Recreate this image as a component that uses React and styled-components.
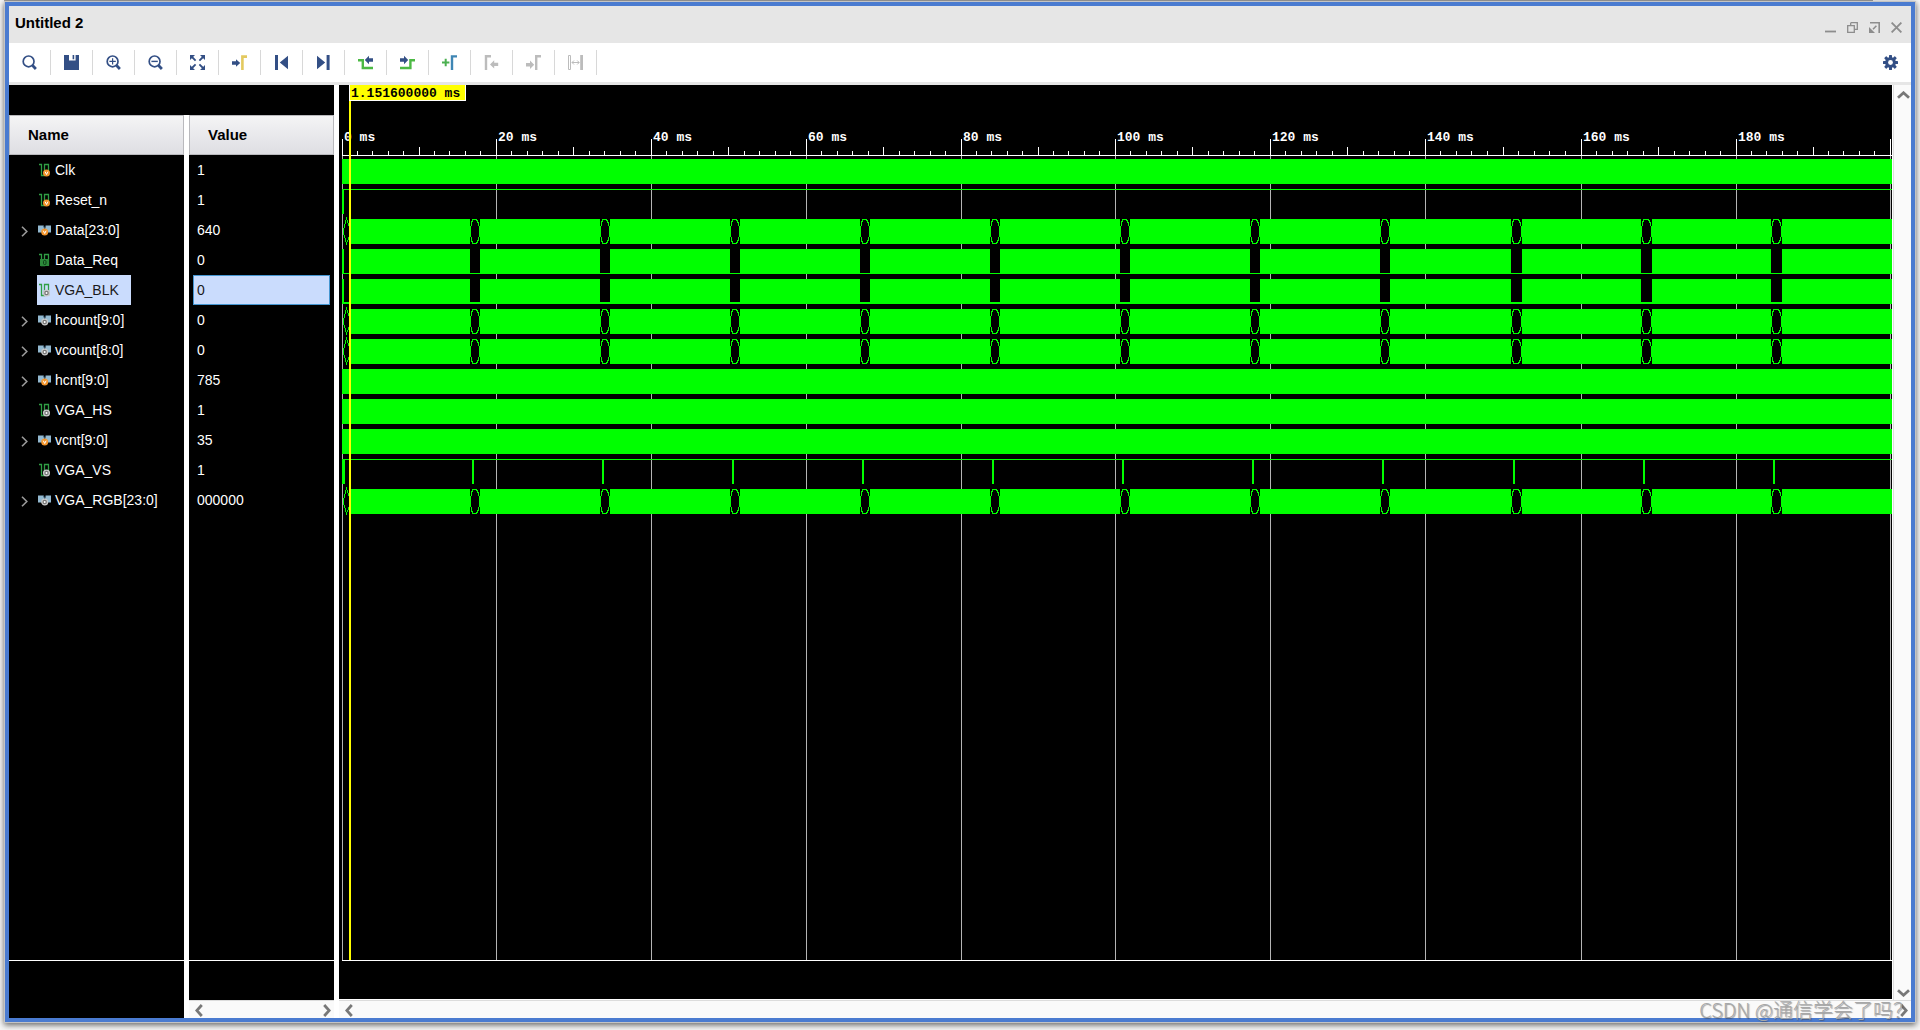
import React from 'react';
import styled, { createGlobalStyle, css } from 'styled-components';

const GREEN = '#00ff00';
const NAVY = '#334f85';
const MUTED = '#bcbcbc';

const GlobalStyle = createGlobalStyle`
  * { box-sizing: border-box; }
  body {
    margin: 0;
    background: #fff;
    color: #000;
    font-family: "Liberation Sans", Arial, sans-serif;
    font-size: 14px;
  }
`;

const Page = styled.div`
  height: 100vh;
  display: flex;
  flex-direction: column;
  overflow: hidden;
  background: #f6f6f6;
`;

const TopEdge = styled.div`
  flex: none;
  height: 1px;
  margin: 0 47px 1px 4px;
  background: #a0a0a0;
`;

const Window = styled.main`
  position: relative;
  flex: 1;
  min-height: 0;
  margin: 0 5px 8px;
  display: flex;
  flex-direction: column;
  border: 4px solid #4a7bd0;
  background: #fff;
  box-shadow: 0 0 0 1px #c4c4c4, 0 2px 6px 1px rgba(0, 0, 0, 0.6);
`;

const TitleBar = styled.header`
  flex: none;
  height: 37px;
  padding: 0 9px 0 6px;
  display: flex;
  align-items: center;
  justify-content: space-between;
  background: #e6e6e6;
`;

const Title = styled.h1`
  margin: 0;
  padding-bottom: 3px;
  font-size: 15px;
  line-height: 20px;
`;

const WindowButtons = styled.div`
  display: flex;
  gap: 11px;
  padding-top: 6px;
`;

const IconButton = styled.button`
  display: flex;
  align-items: center;
  justify-content: center;
  padding: 0;
  border: 0;
  background: none;
  svg { display: block; flex: none; }
`;

const Toolbar = styled.div`
  flex: none;
  height: 42px;
  display: flex;
  align-items: center;
  border-bottom: 3px solid #e6e6e6;
  background: #fff;
`;

const ToolButton = styled(IconButton)`
  width: 42px;
  height: 25px;
  border-right: 1px solid #d8d8d8;
`;

const SettingsButton = styled(IconButton)`
  margin: 0 13px 0 auto;
`;

const Content = styled.div`
  flex: 1;
  min-height: 0;
  display: flex;
  gap: 5px;
`;

const SignalPanes = styled.section`
  flex: none;
  display: flex;
  flex-direction: column;
`;

const PaneTop = styled.div`
  flex: none;
  height: 30px;
  background: #000;
`;

const PaneColumns = styled.div`
  flex: 1;
  min-height: 0;
  display: flex;
  gap: 5px;
`;

const Pane = styled.div`
  width: ${(p) => p.$width}px;
  display: flex;
  flex-direction: column;
  background: #000;
`;

const PaneHeader = styled.h2`
  flex: none;
  height: 40px;
  margin: 0;
  padding: 0 18px;
  border: 1px solid #b9b9bd;
  background: linear-gradient(#f4f4f5, #dedee3);
  font-size: 15px;
  line-height: 38px;
`;

const Rows = styled.ul`
  flex: 1;
  min-height: 0;
  margin: 0;
  padding: 0;
  overflow: hidden;
  list-style: none;
  border-bottom: 1px solid #fff;
`;

const PaneFoot = styled.div`
  flex: none;
  height: ${(p) => p.$height}px;
  background: #000;
`;

const NameRow = styled.li`
  height: 30px;
  display: flex;
  align-items: center;
`;

const Expander = styled(IconButton)`
  width: 28px;
  height: 30px;
  padding: 2px 0 0 3px;
`;

const ExpanderSpace = styled.span`
  width: 28px;
`;

const selectedColors = css`
  background: #cadcfd;
  color: #1a1a1a;
`;

const NameCell = styled.span`
  height: 30px;
  padding: 0 12px 0 1px;
  display: flex;
  align-items: center;
  gap: 3px;
  color: #fff;
  line-height: 30px;
  white-space: nowrap;
  ${(p) => p.$selected && selectedColors}
`;

const ValueCell = styled.li`
  height: 30px;
  margin: 0 4px;
  padding: 0 3px;
  border: 1px solid ${(p) => (p.$selected ? '#4596d1' : 'transparent')};
  color: #fff;
  line-height: 28px;
  ${(p) => p.$selected && selectedColors}
`;

const ScrollBar = styled.div`
  flex: none;
  display: flex;
  justify-content: space-between;
  align-items: center;
  background: #fafafa;
  ${(p) =>
    p.$vertical
      ? css`
          width: 19px;
          flex-direction: column;
          padding: 6px 0 3px 2px;
          border-left: 1px solid #fff;
          box-shadow: inset 1px 0 #dcdcdc;
        `
      : css`
          height: 18px;
          padding: 1px 3px 0 6px;
          border-top: 1px solid #dcdcdc;
        `}
`;

const WavePane = styled.section`
  flex: 1;
  min-width: 0;
  display: flex;
  flex-direction: column;
`;

const WaveMain = styled.div`
  flex: 1;
  min-height: 0;
  display: flex;
`;

const WaveColumn = styled.div`
  flex: 1;
  min-width: 0;
  display: flex;
  flex-direction: column;
  background: #000;
  border-bottom: 1px solid #fff;
`;

const WaveView = styled.div`
  position: relative;
  flex: 1;
  min-height: 0;
  margin-left: 3px;
  border-bottom: 1px solid #fff;
`;

const Chart = styled.svg`
  display: block;
  width: 100%;
  height: 100%;
  shape-rendering: crispEdges;
  text {
    fill: #fff;
    font: bold 13px "Liberation Mono", monospace;
    white-space: pre;
  }
`;

const CursorLabel = styled.div`
  position: absolute;
  top: 0;
  left: 7px;
  width: 117px;
  height: 16px;
  padding-left: 1px;
  border: 1px solid #fff;
  border-top: 0;
  background: #ff0;
  font: bold 13px/18px "Liberation Mono", monospace;
  white-space: nowrap;
`;

const Watermark = styled.div`
  position: absolute;
  right: -2px;
  bottom: -5px;
  color: #a8a8a8;
  font: 300 20px/26px "Noto Sans CJK SC", sans-serif;
  text-shadow: 1px 1px 1px rgba(60, 60, 60, 0.5);
  white-space: nowrap;
  pointer-events: none;
`;

/* Signals */

const SIGNALS = [
  { name: 'Clk', value: '1', kind: 'bit', badge: 'v', wave: 'solid' },
  { name: 'Reset_n', value: '1', kind: 'bit', badge: 'v', wave: 'high' },
  { name: 'Data[23:0]', value: '640', kind: 'bus', badge: 'v', wave: 'bus' },
  { name: 'Data_Req', value: '0', kind: 'bit', badge: 'reg', wave: 'pulse' },
  { name: 'VGA_BLK', value: '0', kind: 'bit', badge: 'out', wave: 'pulse', selected: true },
  { name: 'hcount[9:0]', value: '0', kind: 'bus', badge: 'out', wave: 'bus' },
  { name: 'vcount[8:0]', value: '0', kind: 'bus', badge: 'out', wave: 'bus' },
  { name: 'hcnt[9:0]', value: '785', kind: 'bus', badge: 'v', wave: 'solid' },
  { name: 'VGA_HS', value: '1', kind: 'bit', badge: 'out', wave: 'solid' },
  { name: 'vcnt[9:0]', value: '35', kind: 'bus', badge: 'v', wave: 'solid' },
  { name: 'VGA_VS', value: '1', kind: 'bit', badge: 'out', wave: 'sync' },
  { name: 'VGA_RGB[23:0]', value: '000000', kind: 'bus', badge: 'out', wave: 'bus' },
];

/* Horizontal positions on the time axis, measured from 0 ms */
const MAJORS = [0, 154, 309, 464, 619, 773, 928, 1083, 1239, 1394, 1548];
const BLANKS = [
  [128, 138], [258, 268], [388, 398], [518, 528], [648, 658], [778, 788],
  [908, 918], [1038, 1048], [1169, 1180], [1299, 1310], [1429, 1440],
];
const RULER_Y = 70;

function Badge({ type, x, y }) {
  if (type === 'reg') {
    return (
      <g>
        <rect x="2" y="6" width="9" height="7" fill="#2c8a3a" />
        <rect x="5.5" y="7.5" width="2.5" height="4" rx="1" fill="none" stroke="#0e3f18" />
      </g>
    );
  }
  if (type === 'v') {
    return (
      <g>
        <circle cx={x} cy={y} r="3.5" fill="#f3952c" />
        <path d={`M${x - 1.4} ${y - 1.3}l1.4 2.8 1.4-2.8`} fill="none" stroke="#fff" strokeWidth="1" />
      </g>
    );
  }
  return (
    <g>
      <circle cx={x} cy={y} r="2.9" fill="#777" stroke="#c9c9c9" strokeWidth="1.3" />
      <circle cx={x} cy={y} r="1" fill="#fff" />
    </g>
  );
}

function SignalIcon({ kind, badge }) {
  return (
    <svg width="14" height="14" viewBox="0 0 14 14" aria-hidden="true">
      {kind === 'bit' ? (
        <>
          <path d="M1 1.5h2.5v11h3v-11h4v11" fill="none" stroke="#2f9e44" strokeWidth="1.3" />
          <Badge type={badge} x={8.5} y={10} />
        </>
      ) : (
        <>
          <path d="M0 2.5h5.5l1.2 3 1.2-3H13v7H0z" fill="#93b9d0" />
          <path d="M5.5 2.5l1.2 3.4 1.2-3.4" fill="none" stroke="#3a566b" />
          <Badge type={badge} x={6.7} y={9} />
        </>
      )}
    </svg>
  );
}

const CHEVRONS = {
  left: { w: 8, h: 13, d: 'M6.8 1L1.8 6.5l5 5.5' },
  right: { w: 8, h: 13, d: 'M1.2 1l5 5.5-5 5.5' },
  up: { w: 13, h: 8, d: 'M1 6.8l5.5-5 5.5 5' },
  down: { w: 13, h: 8, d: 'M1 1.2l5.5 5 5.5-5' },
};

function ScrollArrow({ dir }) {
  const c = CHEVRONS[dir];
  return (
    <IconButton aria-label={`Scroll ${dir}`}>
      <svg width={c.w} height={c.h} viewBox={`0 0 ${c.w} ${c.h}`}>
        <path d={c.d} fill="none" stroke="#787878" strokeWidth="2.8" />
      </svg>
    </IconButton>
  );
}

/* Toolbar drawings, each on a 15 x 15 grid */

const lens = (
  <>
    <circle cx="6.6" cy="6.4" r="5.4" fill="none" stroke={NAVY} strokeWidth="1.7" />
    <path d="M10.6 10.6l3.3 3.3" stroke={NAVY} strokeWidth="2.8" />
  </>
);

const arrowRight = (x, y, fill) => (
  <path d={`M${x} ${y - 1.7}h4v-2.5l4.2 4.2-4.2 4.2v-2.5h-4z`} fill={fill} />
);
const arrowLeft = (x, y, fill) => (
  <path d={`M${x} ${y - 1.7}h-4v-2.5l-4.2 4.2 4.2 4.2v-2.5h4z`} fill={fill} />
);

const TOOLS = [
  ['Find', lens],
  ['Save waveform', <path d="M0 0h5v5.6h6.6V0H15v15H0zM8.6 0h1.6v4.3H8.6z" fill={NAVY} />],
  ['Zoom in', <>{lens}<path d="M3.4 6.4h6.4M6.6 3.2v6.4" stroke={NAVY} strokeWidth="1.2" /></>],
  ['Zoom out', <>{lens}<path d="M3.4 6.4h6.4" stroke={NAVY} strokeWidth="1.4" /></>],
  [
    'Zoom fit',
    <>
      <path d="M0 0h5L0 5zM15 0v5L10 0zM0 15v-5l5 5zM15 15h-5l5-5z" fill={NAVY} />
      <path d="M2 2l3.6 3.6M13 2L9.4 5.6M2 13l3.6-3.6M13 13L9.4 9.4" stroke={NAVY} strokeWidth="1.8" />
    </>,
  ],
  [
    'Go to cursor',
    <>
      <path d="M0 6.2h4V4.2l4.2 3.8L4 11.8v-2H0z" fill={NAVY} />
      <path d="M10.4 15V1.6H15" fill="none" stroke="#e3c95f" strokeWidth="2.6" />
    </>,
  ],
  ['Go to time 0', <path d="M1 0h3v15H1zM14 .8v13.4L5.8 7.5z" fill={NAVY} />],
  ['Go to last time', <path d="M10.6 0h3v15h-3zM1 .8v13.4l8.2-6.7z" fill={NAVY} />],
  [
    'Previous transition',
    <>
      <path d="M0 5.2h4.8v7.8H15" fill="none" stroke="#4cb944" strokeWidth="2.4" />
      {arrowLeft(15, 5, NAVY)}
    </>,
  ],
  [
    'Next transition',
    <>
      <path d="M15 5.2h-4.6v7.8H0" fill="none" stroke="#4cb944" strokeWidth="2.4" />
      {arrowRight(0, 5, NAVY)}
    </>,
  ],
  [
    'Add marker',
    <>
      <path d="M0 7.5h7.4M3.7 3.8v7.4" stroke="#4cb050" strokeWidth="2" />
      <path d="M10 15V1.4h5" fill="none" stroke="#3f86b4" strokeWidth="2.4" />
    </>,
  ],
  [
    'Previous marker',
    <>
      <path d="M2 15V1.2h5" fill="none" stroke={MUTED} strokeWidth="2.4" />
      {arrowLeft(14.2, 9.4, MUTED)}
    </>,
  ],
  [
    'Next marker',
    <>
      <path d="M10.2 15V1.2H15" fill="none" stroke={MUTED} strokeWidth="2.4" />
      {arrowRight(0, 9.8, MUTED)}
    </>,
  ],
  [
    'Swap cursors',
    <>
      <path d="M.5.5v14h2V.5z" fill="none" stroke={MUTED} />
      <path d="M12.2 0H15v15h-2.8zM4 7h7v1H4z" fill={MUTED} />
      <path d="M6 5.5L4 7.5l2 2M9.2 5.5l2 2-2 2" fill="none" stroke={MUTED} />
    </>,
  ],
];

const WINDOW_ICONS = [
  ['Minimize', <path d="M0 9.5h11" strokeWidth="1.8" />],
  ['Restore', <path d="M3.7.7h6.6v6.6H7.3M3.7.7v3M.7 3.7h6.6v6.6H.7z" strokeWidth="1.3" />],
  [
    'Float',
    <>
      <path d="M1 .8h9.2V11M7.4 3.8L4 7.2" strokeWidth="1.6" />
      <path d="M0 5v6h6z" fill="#8d8d8d" stroke="none" />
    </>,
  ],
  ['Close', <path d="M.6.6l9.8 9.8M10.4.6L.6 10.4" strokeWidth="1.9" />],
];

function Gear() {
  return (
    <svg width="15" height="15" viewBox="0 0 15 15" aria-hidden="true">
      {[0, 45, 90, 135].map((a) => (
        <rect key={a} x="6" y="0" width="3" height="15" rx="0.6" fill={NAVY} transform={`rotate(${a} 7.5 7.5)`} />
      ))}
      <circle cx="7.5" cy="7.5" r="5.4" fill={NAVY} />
      <circle cx="7.5" cy="7.5" r="2.4" fill="#fff" />
    </svg>
  );
}

/* Waveforms */

function BusCross({ from, to }) {
  const l = from + 0.5;
  const r = to - 0.5;
  return (
    <>
      <rect x={from} y="4" width={to - from} height="25" fill="#000" />
      <path
        d={`M${from} 16.5L${l + 1} 8.5L${l + 2} 4.5H${r - 3}L${r - 1} 8.5L${to} 16.5L${r - 1} 24.5L${r - 3} 28.5H${l + 2}L${l + 1} 24.5Z`}
        fill="#000"
        stroke={GREEN}
      />
    </>
  );
}

function Trace({ wave, selected }) {
  const low = selected ? 2 : 1;
  switch (wave) {
    case 'high':
      return (
        <>
          <rect x="0" y="4" width="100%" height="1" fill={GREEN} />
          <rect x="0" y="4" width="2" height="25" fill={GREEN} />
        </>
      );
    case 'sync':
      return (
        <>
          <rect x="0" y="4" width="100%" height="1" fill={GREEN} />
          <rect x="0" y="4" width="3" height="25" fill={GREEN} />
          {BLANKS.map(([from]) => (
            <rect key={from} x={from + 2} y="4" width="2" height="25" fill={GREEN} />
          ))}
        </>
      );
    case 'pulse':
      return (
        <>
          <rect x="0" y="4" width="100%" height="25" fill={GREEN} />
          {[[2, 7], ...BLANKS].map(([from, to]) => (
            <rect key={from} x={from} y="4" width={to - from} height={25 - low} fill="#000" />
          ))}
        </>
      );
    case 'bus':
      return (
        <>
          <rect x="7" y="4" width="100%" height="25" fill={GREEN} />
          <path d="M1 16.5L4.5 3.5L7.5 12M1 16.5L4.5 28.5L7.5 21" fill="none" stroke={GREEN} />
          {BLANKS.map(([from, to]) => (
            <BusCross key={from} from={from} to={to} />
          ))}
        </>
      );
    default:
      return <rect x="0" y="4" width="100%" height="25" fill={GREEN} />;
  }
}

function Ruler() {
  const minors = MAJORS.slice(0, -1).flatMap((start, i) => {
    const span = MAJORS[i + 1] - start;
    return [1, 2, 3, 4, 5, 6, 7, 8, 9].map((n) => ({
      x: start + Math.floor((span * n) / 10),
      h: n === 5 ? 8 : 4,
    }));
  });
  return (
    <>
      <rect x="0" y={RULER_Y} width="100%" height="1" fill="#fff" />
      {minors.map(({ x, h }) => (
        <rect key={x} x={x} y={RULER_Y - h} width="1" height={h} fill="#fff" />
      ))}
      {MAJORS.map((x, i) => (
        <g key={x}>
          <rect x={x} y="54" width="1" height="17" fill="#fff" />
          <rect x={x} y="71" width="1" height="100%" fill="#b4b4b4" />
          {i < 10 && <text x={x + 2} y="56">{`${i * 20} ms`}</text>}
        </g>
      ))}
    </>
  );
}

export default function App() {
  return (
    <>
      <GlobalStyle />
      <Page>
        <TopEdge />
        <Window>
          <TitleBar>
            <Title>Untitled 2</Title>
            <WindowButtons>
              {WINDOW_ICONS.map(([label, art]) => (
                <IconButton key={label} aria-label={label}>
                  <svg width="11" height="11" viewBox="0 0 11 11" fill="none" stroke="#8d8d8d">{art}</svg>
                </IconButton>
              ))}
            </WindowButtons>
          </TitleBar>

          <Toolbar role="toolbar">
            {TOOLS.map(([label, art]) => (
              <ToolButton key={label} aria-label={label}>
                <svg width="15" height="15" viewBox="0 0 15 15">{art}</svg>
              </ToolButton>
            ))}
            <SettingsButton aria-label="Settings"><Gear /></SettingsButton>
          </Toolbar>

          <Content>
            <SignalPanes>
              <PaneTop />
              <PaneColumns>
                <Pane $width={175}>
                  <PaneHeader>Name</PaneHeader>
                  <Rows>
                    {SIGNALS.map((s) => (
                      <NameRow key={s.name}>
                        {s.kind === 'bus' ? (
                          <Expander aria-label={`Expand ${s.name}`}>
                            <svg width="7" height="11" viewBox="0 0 7 11">
                              <path d="M1 .8l4.8 4.7L1 10.2" fill="none" stroke="#9a9a9a" strokeWidth="1.6" />
                            </svg>
                          </Expander>
                        ) : (
                          <ExpanderSpace />
                        )}
                        <NameCell $selected={s.selected}>
                          <SignalIcon kind={s.kind} badge={s.badge} />
                          {s.name}
                        </NameCell>
                      </NameRow>
                    ))}
                  </Rows>
                  <PaneFoot $height={57} />
                </Pane>
                <Pane $width={145}>
                  <PaneHeader>Value</PaneHeader>
                  <Rows>
                    {SIGNALS.map((s) => (
                      <ValueCell key={s.name} $selected={s.selected}>{s.value}</ValueCell>
                    ))}
                  </Rows>
                  <PaneFoot $height={39} />
                  <ScrollBar>
                    <ScrollArrow dir="left" />
                    <ScrollArrow dir="right" />
                  </ScrollBar>
                </Pane>
              </PaneColumns>
            </SignalPanes>

            <WavePane>
              <WaveMain>
                <WaveColumn>
                  <WaveView>
                    <Chart>
                      <Ruler />
                      {SIGNALS.map((s, i) => (
                        <g key={s.name} transform={`translate(0 ${RULER_Y + i * 30})`}>
                          <Trace wave={s.wave} selected={s.selected} />
                        </g>
                      ))}
                      <rect x="7" y="0" width="2" height="100%" fill="#ff0" />
                    </Chart>
                    <CursorLabel>1.151600000 ms</CursorLabel>
                  </WaveView>
                  <PaneFoot $height={38} />
                </WaveColumn>
                <ScrollBar $vertical>
                  <ScrollArrow dir="up" />
                  <ScrollArrow dir="down" />
                </ScrollBar>
              </WaveMain>
              <ScrollBar>
                <ScrollArrow dir="left" />
                <ScrollArrow dir="right" />
              </ScrollBar>
            </WavePane>
          </Content>
          <Watermark>CSDN @通信学会了吗？</Watermark>
        </Window>
      </Page>
    </>
  );
}
